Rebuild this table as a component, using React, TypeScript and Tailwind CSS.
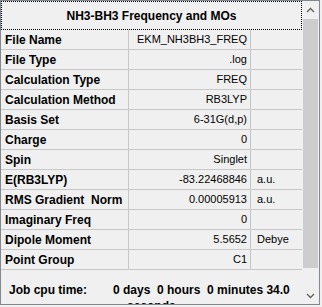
import React from 'react';

type Row = { label: string; value: string; unit?: string };

const rows: Row[] = [
  { label: 'File Name', value: 'EKM_NH3BH3_FREQ' },
  { label: 'File Type', value: '.log' },
  { label: 'Calculation Type', value: 'FREQ' },
  { label: 'Calculation Method', value: 'RB3LYP' },
  { label: 'Basis Set', value: '6-31G(d,p)' },
  { label: 'Charge', value: '0' },
  { label: 'Spin', value: 'Singlet' },
  { label: 'E(RB3LYP)', value: '-83.22468846', unit: 'a.u.' },
  { label: 'RMS Gradient  Norm', value: '0.00005913', unit: 'a.u.' },
  { label: 'Imaginary Freq', value: '0' },
  { label: 'Dipole Moment', value: '5.5652', unit: 'Debye' },
  { label: 'Point Group', value: 'C1' },
];

function Chevron({ up }: { up?: boolean }) {
  return (
    <svg width="9" height="6" viewBox="0 0 9 6">
      <polyline
        points={up ? '1,5 4.5,1.5 8,5' : '1,1 4.5,4.5 8,1'}
        fill="none"
        stroke="#606060"
        strokeWidth="1.3"
      />
    </svg>
  );
}

export default function App() {
  return (
    <div
      className="w-[322px] h-[307px] bg-[#f0f0f0] text-black"
      style={{ fontFamily: '"Liberation Sans", Arial, sans-serif' }}
    >
      <div className="w-[320px] h-[305px] border border-[#828790] flex overflow-hidden">
        {/* summary table */}
        <div className="w-[301px] flex flex-col">
          <div className="h-[29px] border border-dotted border-black flex items-center justify-center text-[12px] font-bold">
            NH3-BH3 Frequency and MOs
          </div>
          {rows.map((r) => (
            <div
              key={r.label}
              className="h-[20px] grid grid-cols-[128px_122px_1fr] border-b border-[#c8c8c8]"
            >
              <div className="border-r border-[#c8c8c8] pl-[4px] flex items-center text-[12px] font-bold whitespace-pre">
                {r.label}
              </div>
              <div className="border-r border-[#c8c8c8] pr-[3px] flex items-center justify-end text-[11px]">
                {r.value}
              </div>
              <div className="pl-[6px] flex items-center text-[11px]">{r.unit}</div>
            </div>
          ))}
          {/* cpu time footer, second line runs past the panel edge */}
          <div className="flex-1 overflow-hidden pt-[12px] text-[12px] font-bold leading-[16px] flex">
            <div className="w-[112px] pl-[8px] shrink-0">Job cpu time:</div>
            <div className="whitespace-pre">
              <div>{'0 days  0 hours  0 minutes 34.0'}</div>
              <div className="pl-[14px]">seconds</div>
            </div>
          </div>
        </div>

        {/* vertical scrollbar */}
        <div className="w-[17px] flex flex-col bg-[#f0f0f0]">
          <div className="h-[18px] flex items-center justify-center">
            <Chevron up />
          </div>
          <div className="h-[249px] px-[1px]">
            <div className="h-full bg-[#cdcdcd]" />
          </div>
          <div className="flex-1" />
          <div className="h-[17px] flex items-center justify-center">
            <Chevron />
          </div>
        </div>
      </div>
    </div>
  );
}
